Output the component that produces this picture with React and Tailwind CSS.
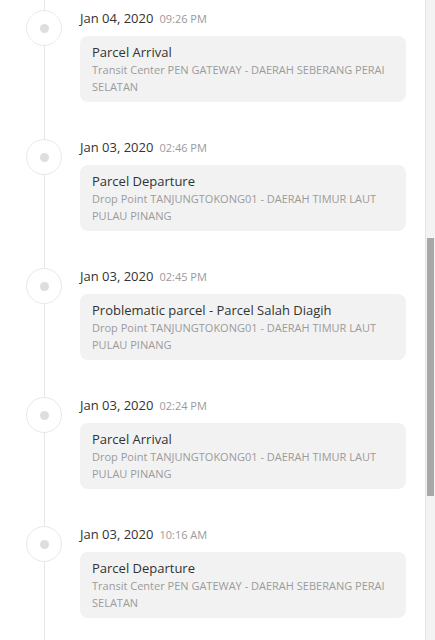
import React from 'react';

// tracking history, newest first
const events = [
  {
    date: 'Jan 04, 2020',
    time: '09:26 PM',
    title: 'Parcel Arrival',
    place: 'Transit Center PEN GATEWAY - DAERAH SEBERANG PERAI SELATAN',
  },
  {
    date: 'Jan 03, 2020',
    time: '02:46 PM',
    title: 'Parcel Departure',
    place: 'Drop Point TANJUNGTOKONG01 - DAERAH TIMUR LAUT PULAU PINANG',
  },
  {
    date: 'Jan 03, 2020',
    time: '02:45 PM',
    title: 'Problematic parcel - Parcel Salah Diagih',
    place: 'Drop Point TANJUNGTOKONG01 - DAERAH TIMUR LAUT PULAU PINANG',
  },
  {
    date: 'Jan 03, 2020',
    time: '02:24 PM',
    title: 'Parcel Arrival',
    place: 'Drop Point TANJUNGTOKONG01 - DAERAH TIMUR LAUT PULAU PINANG',
  },
  {
    date: 'Jan 03, 2020',
    time: '10:16 AM',
    title: 'Parcel Departure',
    place: 'Transit Center PEN GATEWAY - DAERAH SEBERANG PERAI SELATAN',
  },
];

function TimelineItem({ date, time, title, place }) {
  return (
    <div className="flex flex-none">
      {/* rail + marker */}
      <div className="w-[36px] flex-none flex flex-col items-center">
        <div className="w-px h-px bg-[#e6e6e6]" />
        <div className="w-[36px] h-[36px] flex-none rounded-full border border-[#e8e8e8] bg-white flex items-center justify-center">
          <div className="w-[9px] h-[9px] rounded-full bg-[#dedede]" />
        </div>
        <div className="w-px flex-1 bg-[#e6e6e6]" />
      </div>

      <div className="flex-1 ml-[18px] pb-[36px]">
        <div className="flex items-baseline gap-[6px] h-[18px] leading-[18px]">
          <span className="text-[13px] text-[#333333]">{date}</span>
          <span className="text-[11px] text-[#9a9a9a]">{time}</span>
        </div>
        <div className="mt-[9px] rounded-lg bg-[#f2f2f2] pl-[12px] pr-[10px] pt-[7px] pb-[7px]">
          <p className="text-[13px] leading-[18px] text-[#333333]">{title}</p>
          <p className="text-[11px] leading-[17px] text-[#9b9b9b]">{place}</p>
        </div>
      </div>
    </div>
  );
}

export default function App() {
  return (
    <div
      className="w-[435px] h-[640px] overflow-hidden bg-white flex"
      style={{ fontFamily: '"Open Sans", "Noto Sans", sans-serif' }}
    >
      <div className="flex-1 flex flex-col pl-[26px] pr-[19px]">
        <div className="w-[36px] h-[9px] flex-none flex justify-center">
          <div className="w-px bg-[#e6e6e6]" />
        </div>
        {events.map((e, i) => (
          <TimelineItem key={i} {...e} />
        ))}
      </div>

      {/* scrollbar */}
      <div className="w-[10px] flex-none bg-[#f3f3f3] border-l border-[#e4e4e4] flex flex-col items-center pt-[238px]">
        <div className="w-[7px] h-[258px] flex-none bg-[#a8a8a8]" />
      </div>
    </div>
  );
}
